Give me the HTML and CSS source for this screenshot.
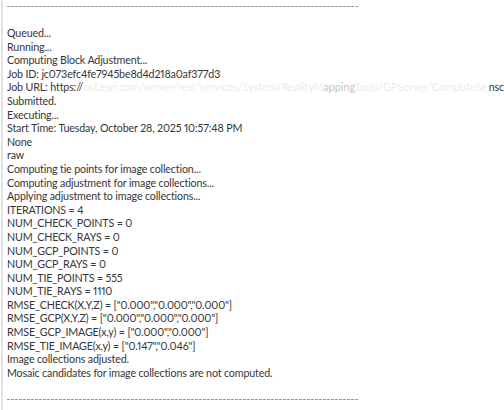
FILE: index.html
```html
<!DOCTYPE html>
<html>
<head>
<meta charset="utf-8">
<link rel="stylesheet" href="styles.css">
</head>
<body>
<div class="log">
  <div class="rule"></div>
  <div class="lines">
    <div>Queued...</div>
    <div>Running...</div>
    <div>Computing Block Adjustment...</div>
    <div>Job ID: jc073efc4fe7945be8d4d218a0af377d3</div>
    <div class="url"><span class="lbl">Job URL: https://</span><span class="blur">ost.esri.com/server/rest/services/System/RealityM<span class="half">apping</span>Tools/GPServer/ComputeSe</span><span class="tail">nsc</span></div>
    <div>Submitted.</div>
    <div>Executing...</div>
    <div>Start Time: Tuesday, October 28, 2025 10:57:48 PM</div>
    <div>None</div>
    <div>raw</div>
    <div>Computing tie points for image collection...</div>
    <div>Computing adjustment for image collections...</div>
    <div>Applying adjustment to image collections...</div>
    <div>ITERATIONS = 4</div>
    <div>NUM_CHECK_POINTS = 0</div>
    <div>NUM_CHECK_RAYS = 0</div>
    <div>NUM_GCP_POINTS = 0</div>
    <div>NUM_GCP_RAYS = 0</div>
    <div>NUM_TIE_POINTS = 555</div>
    <div>NUM_TIE_RAYS = 1110</div>
    <div>RMSE_CHECK(X,Y,Z) = ["0.000","0.000","0.000"]</div>
    <div>RMSE_GCP(X,Y,Z) = ["0.000","0.000","0.000"]</div>
    <div>RMSE_GCP_IMAGE(x,y) = ["0.000","0.000"]</div>
    <div>RMSE_TIE_IMAGE(x,y) = ["0.147","0.046"]</div>
    <div>Image collections adjusted.</div>
    <div>Mosaic candidates for image collections are not computed.</div>
  </div>
  <div class="rule bottom"></div>
</div>
</body>
</html>
```
FILE: styles.css
```css
html, body {
  margin: 0;
  padding: 0;
  background: #ffffff;
}
body {
  width: 504px;
  height: 410px;
  overflow: hidden;
}
.log {
  margin-left: 1px;
  border-left: 2px solid #e2e2e2;
  height: 410px;
  padding: 6px 0 0 4px;
  box-sizing: border-box;
  font-family: Lato, "Noto Sans", sans-serif;
  font-size: 10.7px;
  color: #363636;
}
.rule {
  width: 351px;
  height: 1px;
  background: repeating-linear-gradient(to right, #9a9a9a 0 3px, transparent 3px 4px);
}
.lines {
  margin-top: 19px;
  line-height: 13.6px;
  letter-spacing: -0.15px;
  font-variant-numeric: proportional-nums;
}
.lines div {
  white-space: nowrap;
  overflow: hidden;
}
.url {
  display: flex;
}
.lbl {
  flex: none;
}
.blur {
  flex: 0 1 auto;
  min-width: 0;
  overflow: hidden;
  color: #ececec;
  letter-spacing: 0.04px;
}
.half {
  color: #c4c4c4;
}
.tail {
  flex: none;
  margin-left: auto;
}
.rule.bottom {
  margin-top: 20px;
}
```
